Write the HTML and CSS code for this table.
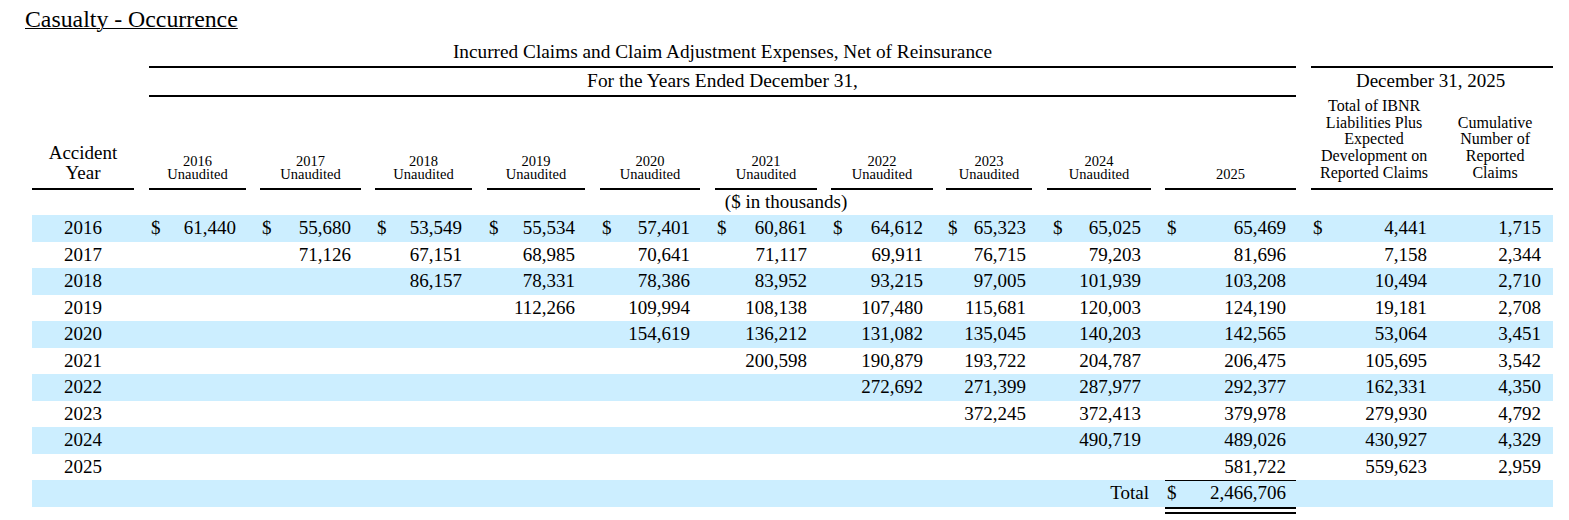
FILE: index.html
```html
<!DOCTYPE html>
<html>
<head>
<meta charset="utf-8">
<link rel="stylesheet" href="styles.css">
</head>
<body>
<div class="title">Casualty - Occurrence</div>
<table class="tbl">
  <colgroup>
    <col class="w-lbl"><col class="w15"><col class="w97"><col class="w14"><col class="w101"><col class="w14"><col class="w97"><col class="w15"><col class="w98"><col class="w15"><col class="w100"><col class="w15"><col class="w102"><col class="w14"><col class="w102"><col class="w13"><col class="w86"><col class="w15"><col class="w104"><col class="w14"><col class="w131"><col class="w15"><col class="w126"><col class="w116">
  </colgroup>
  <tr class="ra">
    <td colspan="2"></td>
    <td colspan="19" class="hd-a">Incurred Claims and Claim Adjustment Expenses, Net of Reinsurance</td>
    <td></td>
    <td colspan="2" class="hd-a"></td>
  </tr>
  <tr class="rb">
    <td colspan="2"></td>
    <td colspan="19" class="hd-b">For the Years Ended December 31,</td>
    <td></td>
    <td colspan="2" class="hd-b2">December 31, 2025</td>
  </tr>
  <tr class="rc">
    <td class="hd-acc">Accident<br>Year</td>
    <td></td><td class="hd-yr">2016<br>Unaudited</td>
    <td></td><td class="hd-yr">2017<br>Unaudited</td>
    <td></td><td class="hd-yr">2018<br>Unaudited</td>
    <td></td><td class="hd-yr">2019<br>Unaudited</td>
    <td></td><td class="hd-yr">2020<br>Unaudited</td>
    <td></td><td class="hd-yr">2021<br>Unaudited</td>
    <td></td><td class="hd-yr">2022<br>Unaudited</td>
    <td></td><td class="hd-yr">2023<br>Unaudited</td>
    <td></td><td class="hd-yr">2024<br>Unaudited</td>
    <td></td><td class="hd-yr">2025</td>
    <td></td>
    <td class="hd-r">Total of IBNR<br>Liabilities Plus<br>Expected<br>Development on<br>Reported Claims</td>
    <td class="hd-r">Cumulative<br>Number of<br>Reported<br>Claims</td>
  </tr>
  <tr class="rd">
    <td colspan="24" class="thous">($ in thousands)</td>
  </tr>
  <tr class="row alt">
    <td class="lbl">2016</td>
    <td></td><td><div class="m"><span>$</span><span>61,440</span></div></td>
    <td></td><td><div class="m"><span>$</span><span>55,680</span></div></td>
    <td></td><td><div class="m"><span>$</span><span>53,549</span></div></td>
    <td></td><td><div class="m"><span>$</span><span>55,534</span></div></td>
    <td></td><td><div class="m"><span>$</span><span>57,401</span></div></td>
    <td></td><td><div class="m"><span>$</span><span>60,861</span></div></td>
    <td></td><td><div class="m"><span>$</span><span>64,612</span></div></td>
    <td></td><td class="c23"><div class="m"><span>$</span><span>65,323</span></div></td>
    <td></td><td class="c24"><div class="m"><span>$</span><span>65,025</span></div></td>
    <td></td><td><div class="m"><span>$</span><span>65,469</span></div></td>
    <td></td><td><div class="m"><span>$</span><span>4,441</span></div></td>
    <td class="cl"><div class="n">1,715</div></td>
  </tr>
  <tr class="row">
    <td class="lbl">2017</td>
    <td></td><td></td>
    <td></td><td><div class="n">71,126</div></td>
    <td></td><td><div class="n">67,151</div></td>
    <td></td><td><div class="n">68,985</div></td>
    <td></td><td><div class="n">70,641</div></td>
    <td></td><td><div class="n">71,117</div></td>
    <td></td><td><div class="n">69,911</div></td>
    <td></td><td class="c23"><div class="n">76,715</div></td>
    <td></td><td><div class="n">79,203</div></td>
    <td></td><td><div class="n">81,696</div></td>
    <td></td><td><div class="n">7,158</div></td>
    <td class="cl"><div class="n">2,344</div></td>
  </tr>
  <tr class="row alt">
    <td class="lbl">2018</td>
    <td></td><td></td>
    <td></td><td></td>
    <td></td><td><div class="n">86,157</div></td>
    <td></td><td><div class="n">78,331</div></td>
    <td></td><td><div class="n">78,386</div></td>
    <td></td><td><div class="n">83,952</div></td>
    <td></td><td><div class="n">93,215</div></td>
    <td></td><td class="c23"><div class="n">97,005</div></td>
    <td></td><td><div class="n">101,939</div></td>
    <td></td><td><div class="n">103,208</div></td>
    <td></td><td><div class="n">10,494</div></td>
    <td class="cl"><div class="n">2,710</div></td>
  </tr>
  <tr class="row">
    <td class="lbl">2019</td>
    <td></td><td></td>
    <td></td><td></td>
    <td></td><td></td>
    <td></td><td><div class="n">112,266</div></td>
    <td></td><td><div class="n">109,994</div></td>
    <td></td><td><div class="n">108,138</div></td>
    <td></td><td><div class="n">107,480</div></td>
    <td></td><td class="c23"><div class="n">115,681</div></td>
    <td></td><td><div class="n">120,003</div></td>
    <td></td><td><div class="n">124,190</div></td>
    <td></td><td><div class="n">19,181</div></td>
    <td class="cl"><div class="n">2,708</div></td>
  </tr>
  <tr class="row alt">
    <td class="lbl">2020</td>
    <td></td><td></td>
    <td></td><td></td>
    <td></td><td></td>
    <td></td><td></td>
    <td></td><td><div class="n">154,619</div></td>
    <td></td><td><div class="n">136,212</div></td>
    <td></td><td><div class="n">131,082</div></td>
    <td></td><td class="c23"><div class="n">135,045</div></td>
    <td></td><td><div class="n">140,203</div></td>
    <td></td><td><div class="n">142,565</div></td>
    <td></td><td><div class="n">53,064</div></td>
    <td class="cl"><div class="n">3,451</div></td>
  </tr>
  <tr class="row">
    <td class="lbl">2021</td>
    <td></td><td></td>
    <td></td><td></td>
    <td></td><td></td>
    <td></td><td></td>
    <td></td><td></td>
    <td></td><td><div class="n">200,598</div></td>
    <td></td><td><div class="n">190,879</div></td>
    <td></td><td class="c23"><div class="n">193,722</div></td>
    <td></td><td><div class="n">204,787</div></td>
    <td></td><td><div class="n">206,475</div></td>
    <td></td><td><div class="n">105,695</div></td>
    <td class="cl"><div class="n">3,542</div></td>
  </tr>
  <tr class="row alt">
    <td class="lbl">2022</td>
    <td></td><td></td>
    <td></td><td></td>
    <td></td><td></td>
    <td></td><td></td>
    <td></td><td></td>
    <td></td><td></td>
    <td></td><td><div class="n">272,692</div></td>
    <td></td><td class="c23"><div class="n">271,399</div></td>
    <td></td><td><div class="n">287,977</div></td>
    <td></td><td><div class="n">292,377</div></td>
    <td></td><td><div class="n">162,331</div></td>
    <td class="cl"><div class="n">4,350</div></td>
  </tr>
  <tr class="row">
    <td class="lbl">2023</td>
    <td></td><td></td>
    <td></td><td></td>
    <td></td><td></td>
    <td></td><td></td>
    <td></td><td></td>
    <td></td><td></td>
    <td></td><td></td>
    <td></td><td class="c23"><div class="n">372,245</div></td>
    <td></td><td><div class="n">372,413</div></td>
    <td></td><td><div class="n">379,978</div></td>
    <td></td><td><div class="n">279,930</div></td>
    <td class="cl"><div class="n">4,792</div></td>
  </tr>
  <tr class="row alt">
    <td class="lbl">2024</td>
    <td></td><td></td>
    <td></td><td></td>
    <td></td><td></td>
    <td></td><td></td>
    <td></td><td></td>
    <td></td><td></td>
    <td></td><td></td>
    <td></td><td class="c23"></td>
    <td></td><td><div class="n">490,719</div></td>
    <td></td><td><div class="n">489,026</div></td>
    <td></td><td><div class="n">430,927</div></td>
    <td class="cl"><div class="n">4,329</div></td>
  </tr>
  <tr class="row">
    <td class="lbl">2025</td>
    <td></td><td></td>
    <td></td><td></td>
    <td></td><td></td>
    <td></td><td></td>
    <td></td><td></td>
    <td></td><td></td>
    <td></td><td></td>
    <td></td><td class="c23"></td>
    <td></td><td></td>
    <td></td><td><div class="n">581,722</div></td>
    <td></td><td><div class="n">559,623</div></td>
    <td class="cl"><div class="n">2,959</div></td>
  </tr>
  <tr class="row alt">
    <td colspan="19" class="tot-lbl">Total</td>
    <td></td>
    <td class="tot"><div class="m"><span>$</span><span>2,466,706</span></div></td>
    <td></td><td></td><td></td>
  </tr>
  <tr class="dbl">
    <td colspan="20"></td>
    <td class="dbl-line"></td>
    <td colspan="3"></td>
  </tr>
</table>
</body>
</html>
```
FILE: styles.css
```css
body {
  margin: 0;
  font-family: "Liberation Serif", "Times New Roman", serif;
  color: #000;
  background: #fff;
}

.title {
  margin-left: 25px;
  padding-top: 6px;
  font-size: 23.8px;
  line-height: 26px;
  text-decoration: underline;
  text-decoration-thickness: 1px;
}

.tbl {
  margin-left: 32px;
  width: 1521px;
  table-layout: fixed;
  border-collapse: separate;
  border-spacing: 0;
  font-size: 19px;
}

.tbl td {
  padding: 0;
  vertical-align: bottom;
  white-space: nowrap;
}

.w-lbl { width: 102px; }
.w13 { width: 13px; }
.w14 { width: 14px; }
.w15 { width: 15px; }
.w86 { width: 86px; }
.w97 { width: 97px; }
.w98 { width: 98px; }
.w100 { width: 100px; }
.w101 { width: 101px; }
.w102 { width: 102px; }
.w104 { width: 104px; }
.w116 { width: 116px; }
.w126 { width: 126px; }
.w131 { width: 131px; }

.tbl td.hd-a {
  padding-top: 9px;
  padding-bottom: 3px;
  line-height: 22px;
  font-size: 19.3px;
  text-align: center;
  border-bottom: 2px solid #000;
}

.tbl td.hd-b {
  padding-top: 2px;
  padding-bottom: 3px;
  line-height: 22px;
  font-size: 19.4px;
  text-align: center;
  border-bottom: 2px solid #000;
}

.tbl td.hd-b2 {
  padding-bottom: 5px;
  line-height: 22px;
  text-align: center;
  padding-right: 3px;
}

.tbl td.hd-acc {
  text-align: center;
  line-height: 20px;
  padding-bottom: 5px;
  border-bottom: 2px solid #000;
}

.tbl td.hd-yr {
  text-align: center;
  font-size: 14.5px;
  line-height: 13.3px;
  padding-bottom: 6px;
  border-bottom: 2px solid #000;
}

.tbl td.hd-r {
  text-align: center;
  font-size: 16px;
  line-height: 16.7px;
  padding-top: 1px;
  padding-bottom: 6px;
  border-bottom: 2px solid #000;
}

.tbl td.thous {
  text-align: center;
  line-height: 23.5px;
  padding-bottom: 2px;
  padding-right: 13px;
}

.row td {
  line-height: 26.55px;
}

.alt {
  background: #cceeff;
}

.tbl td.lbl {
  text-align: center;
}

.m {
  display: flex;
  justify-content: space-between;
  padding: 0 10px 0 2px;
}

.n {
  text-align: right;
  padding-right: 10px;
}

.c23 .m,
.c23 .n {
  padding-right: 6px;
}

.c24 .m {
  padding-left: 6px;
}

.cl .n {
  padding-right: 12px;
}

.tbl td.tot-lbl {
  text-align: right;
  padding-right: 2px;
}

.tbl td.tot {
  box-shadow: inset 0 1px 0 #000;
}

.tbl td.dbl-line {
  border-top: 7px double #000;
  height: 0;
  line-height: 0;
  font-size: 0;
}
```
